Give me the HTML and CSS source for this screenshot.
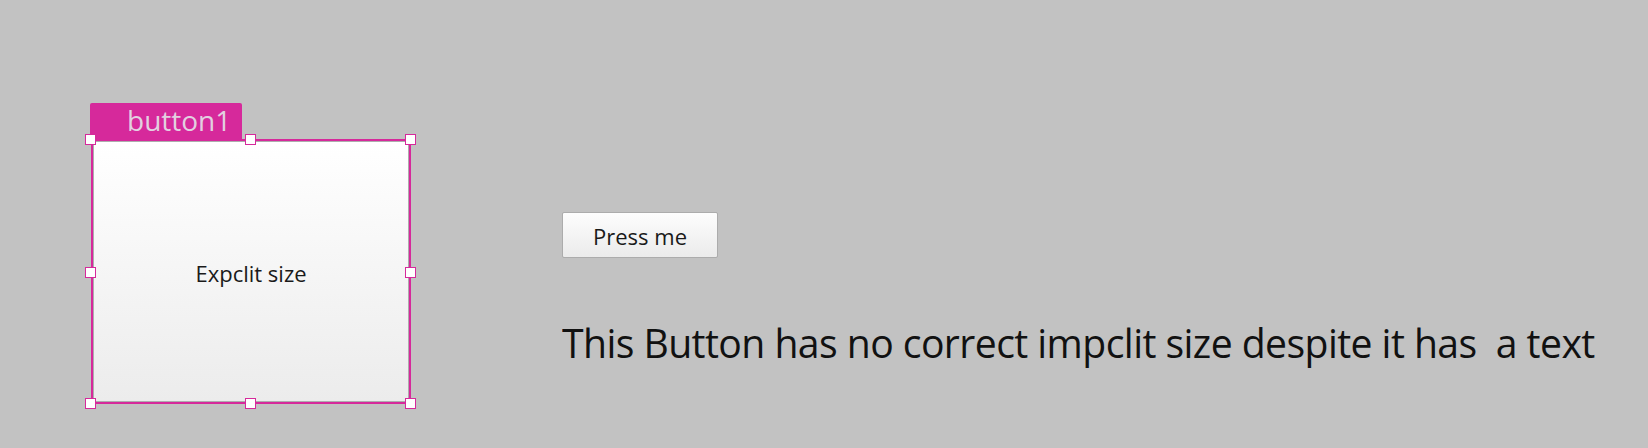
FILE: index.html
```html
<!DOCTYPE html>
<html>
<head>
<meta charset="utf-8">
<link rel="stylesheet" href="styles.css">
</head>
<body>
<div class="surface">
  <div class="designer">
    <div class="tab"><span class="tab-label">button1</span></div>
    <div class="selection">
      <div class="big-button">Expclit size</div>
      <span class="handle h-tl"></span>
      <span class="handle h-tc"></span>
      <span class="handle h-tr"></span>
      <span class="handle h-ml"></span>
      <span class="handle h-mr"></span>
      <span class="handle h-bl"></span>
      <span class="handle h-bc"></span>
      <span class="handle h-br"></span>
    </div>
  </div>
  <div class="content">
    <div class="press-button">Press me</div>
    <div class="note">This Button has no correct impclit size despite it has  a text</div>
  </div>
</div>
</body>
</html>
```
FILE: styles.css
```css
html, body {
  margin: 0;
  padding: 0;
}
body {
  background: #c2c2c2;
  width: 1648px;
  height: 448px;
  overflow: hidden;
  font-family: "Open Sans", "Noto Sans", sans-serif;
}
.surface {
  display: flex;
  align-items: flex-start;
  padding: 103px 0 0 90px;
}
.designer {
  display: flex;
  flex-direction: column;
  width: 321px;
}
.tab {
  width: 152px;
  height: 36px;
  box-sizing: border-box;
  background: #d6299b;
  border-radius: 2px 2px 0 0;
  padding: 0 0 0 37px;
  color: #e2d0e0;
  font-size: 28px;
  line-height: 34px;
  white-space: nowrap;
}
.tab-label {
  display: inline-block;
}
.selection {
  position: relative;
  margin-left: 1px;
  width: 320px;
  height: 265px;
  box-sizing: border-box;
  border: 2px solid #d6299b;
}
.big-button {
  height: 100%;
  box-sizing: border-box;
  border: 1px solid #adadad;
  background: linear-gradient(to bottom, #ffffff 0%, #ececec 100%);
  display: flex;
  align-items: center;
  justify-content: center;
  color: #1a1a1a;
  font-size: 22px;
  padding-top: 2px;
}
.handle {
  position: absolute;
  width: 11px;
  height: 11px;
  box-sizing: border-box;
  background: #ffffff;
  border: 1px solid #d6299b;
}
.h-tl { left: -8px; top: -7px; }
.h-tc { left: calc(50% - 6px); top: -7px; }
.h-tr { left: calc(100% - 4px); top: -7px; }
.h-ml { left: -8px; top: calc(50% - 5px); }
.h-mr { left: calc(100% - 4px); top: calc(50% - 5px); }
.h-bl { left: -8px; top: calc(100% - 4px); }
.h-bc { left: calc(50% - 6px); top: calc(100% - 4px); }
.h-br { left: calc(100% - 4px); top: calc(100% - 4px); }
.content {
  display: flex;
  flex-direction: column;
  align-items: flex-start;
  margin-left: 151px;
  padding-top: 109px;
}
.press-button {
  width: 156px;
  height: 46px;
  box-sizing: border-box;
  border: 1px solid #acacac;
  border-radius: 2px;
  background: linear-gradient(to bottom, #fdfdfd 0%, #ebebeb 100%);
  color: #1a1a1a;
  font-size: 22px;
  display: flex;
  align-items: center;
  justify-content: center;
  padding-top: 1px;
}
.note {
  margin-top: 56px;
  color: #111111;
  font-size: 41px;
  line-height: 56px;
  white-space: pre;
  letter-spacing: -0.6px;
  transform: scaleX(0.955);
  transform-origin: left center;
}
```
